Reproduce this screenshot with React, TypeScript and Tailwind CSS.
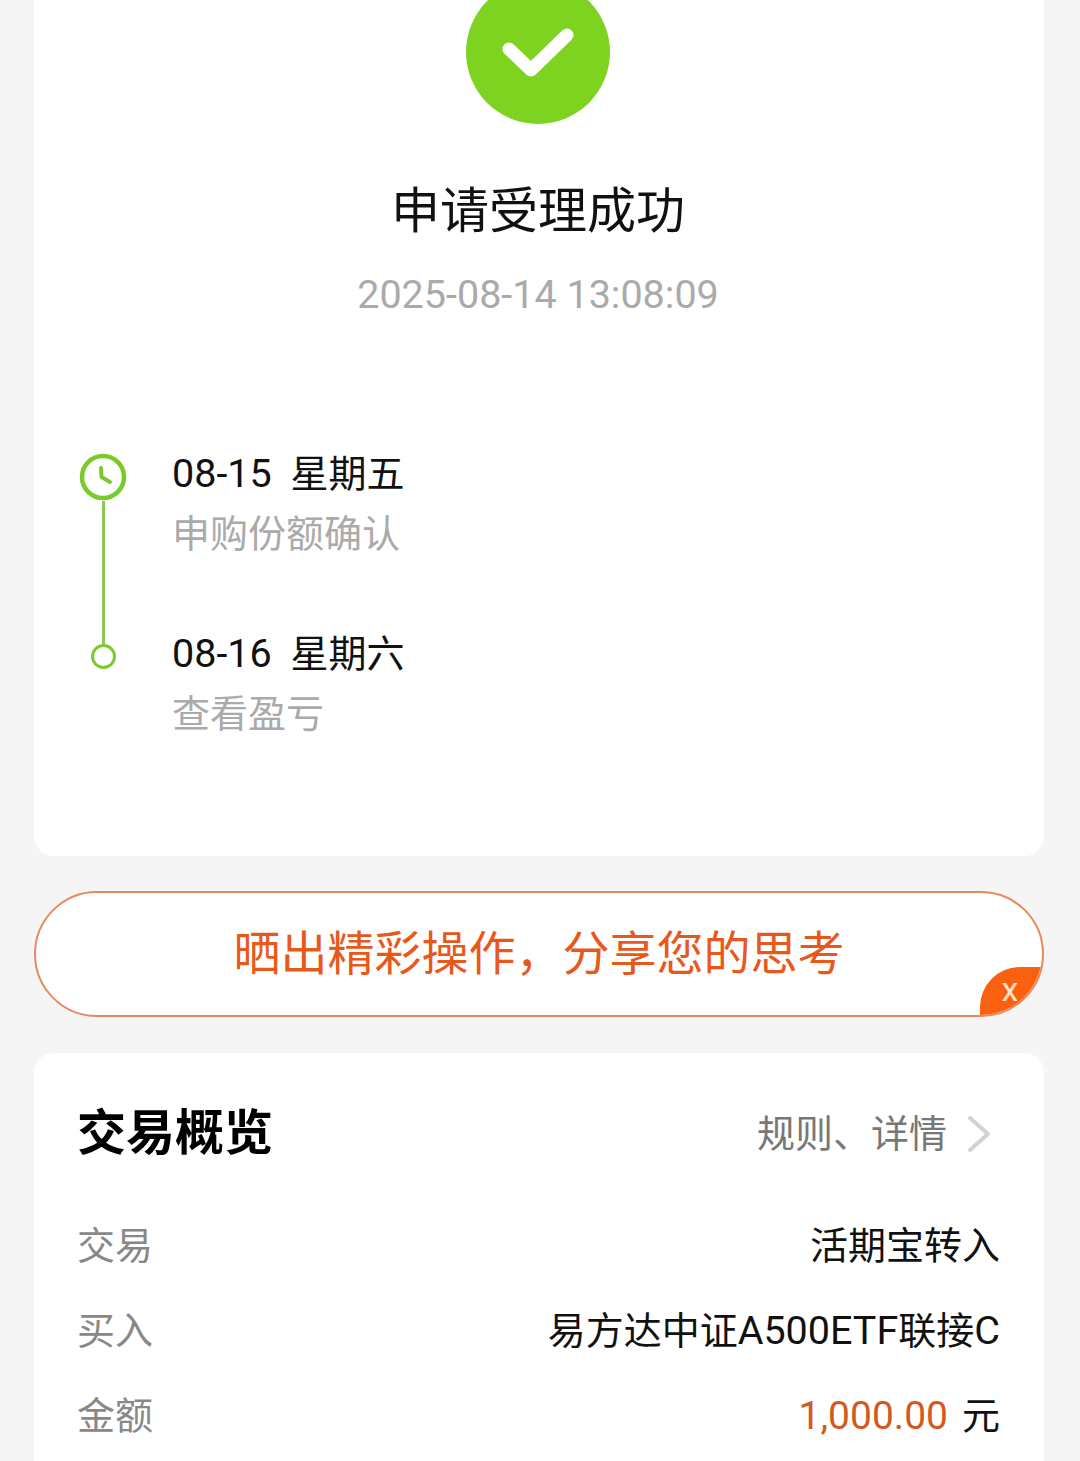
const cjk = "font-['Roboto','Noto_Sans_CJK_SC',sans-serif]";

// latin runs sit a little wider than the cjk glyphs in the reference
function L({ children }: { children: React.ReactNode }) {
    return <span className="text-[39.5px]">{children}</span>;
}

function ClockIcon() {
    return (
        <svg width="48" height="48" viewBox="0 0 48 48" fill="none">
            <circle cx="24" cy="24" r="21" stroke="#7acb2a" strokeWidth="4.5" />
            <path d="M22 15 L22.5 24 L31 29" stroke="#7acb2a" strokeWidth="4" strokeLinecap="round" strokeLinejoin="round" />
        </svg>
    );
}

function Row({ label, children }: { label: string; children: React.ReactNode }) {
    return (
        <div className="flex items-center justify-between h-[85px] text-[38px] leading-[52px] text-[#111]">
            <span className="text-[#888]">{label}</span>
            <span>{children}</span>
        </div>
    );
}

export default function App() {
    return (
        <div className={`h-[1461px] overflow-hidden bg-[#f5f5f5] px-[34px] w-[1080px] ${cjk}`}>
            {/* Result card */}
            <div className="w-[1010px] h-[856px] bg-white rounded-b-[20px] flex flex-col">
                <div className="w-[144px] h-[144px] -mt-[20px] ml-[432px] rounded-full bg-[#7ed321] flex items-center justify-center shrink-0">
                    <svg width="72" height="52" viewBox="0 0 72 52" fill="none">
                        <path d="M7 23 L29 44 L65 9" stroke="white" strokeWidth="13" strokeLinecap="round" strokeLinejoin="round" />
                    </svg>
                </div>
                <div className="text-center text-[49px] leading-[68px] text-[#111] mt-[54px] pr-[2px]">申请受理成功</div>
                <div className="text-center text-[39.5px] leading-[50px] text-[#aaa] mt-[24px] pr-[2px]">2025-08-14 13:08:09</div>

                <div className="flex mt-[128px] pl-[45px]">
                    <div className="flex flex-col items-center w-[48px] pt-[5px]">
                        <ClockIcon />
                        <div className="w-[3px] h-[143px] ml-[1px] bg-[#8cc653]" />
                        <div className="w-[25px] h-[25px] rounded-full border-[3px] border-[#7acb2a] bg-white" />
                    </div>
                    <div className="ml-[45px] flex flex-col">
                        <div className="text-[38px] leading-[52px] text-[#111] whitespace-pre"><L>08-15</L>  星期五</div>
                        <div className="text-[38px] leading-[52px] text-[#aaa] mt-[8px]">申购份额确认</div>
                        <div className="text-[38px] leading-[52px] text-[#111] mt-[68px] whitespace-pre"><L>08-16</L>  星期六</div>
                        <div className="text-[38px] leading-[52px] text-[#aaa] mt-[8px]">查看盈亏</div>
                    </div>
                </div>
            </div>

            {/* Share banner */}
            <div className="relative w-[1010px] h-[126px] mt-[35px] rounded-full border-[2px] border-[#e58a5f] bg-white overflow-hidden flex items-center justify-center">
                <span className="text-[47px] leading-[60px] -mt-[1px] text-[#e8581a]">晒出精彩操作，分享您的思考</span>
                <div className="absolute right-0 bottom-0 w-[62px] h-[48px] bg-[#f9600f] rounded-tl-[40px] rounded-br-[40px] flex items-center justify-center text-[34px] leading-[40px] pr-[2px] pb-[4px] text-[#ffe3c8]">
                    x
                </div>
            </div>

            {/* Trade overview */}
            <div className="w-[1010px] h-[500px] mt-[36px] bg-white rounded-t-[20px] pl-[43px] pr-[44px] pt-[48px]">
                <div className="flex items-center justify-between h-[66px]">
                    <span className="text-[49px] leading-[66px] font-bold text-black">交易概览</span>
                    <span className="flex items-center text-[38px] leading-[52px] text-[#777]">
                        规则、详情
                        <svg className="ml-[20px] mr-[9px]" width="24" height="38" viewBox="0 0 24 38" fill="none">
                            <path d="M3 3 L21 19 L3 35" stroke="#d2d2d2" strokeWidth="4" strokeLinecap="round" strokeLinejoin="round" />
                        </svg>
                    </span>
                </div>
                <div className="mt-[36px]">
                    <Row label="交易">活期宝转入</Row>
                    <Row label="买入">易方达中证<L>A500ETF</L>联接<L>C</L></Row>
                    <Row label="金额">
                        <span className="text-[39px] text-[#d25a20]">1,000.00</span>
                        <span className="ml-[14px]">元</span>
                    </Row>
                </div>
            </div>
        </div>
    );
}
